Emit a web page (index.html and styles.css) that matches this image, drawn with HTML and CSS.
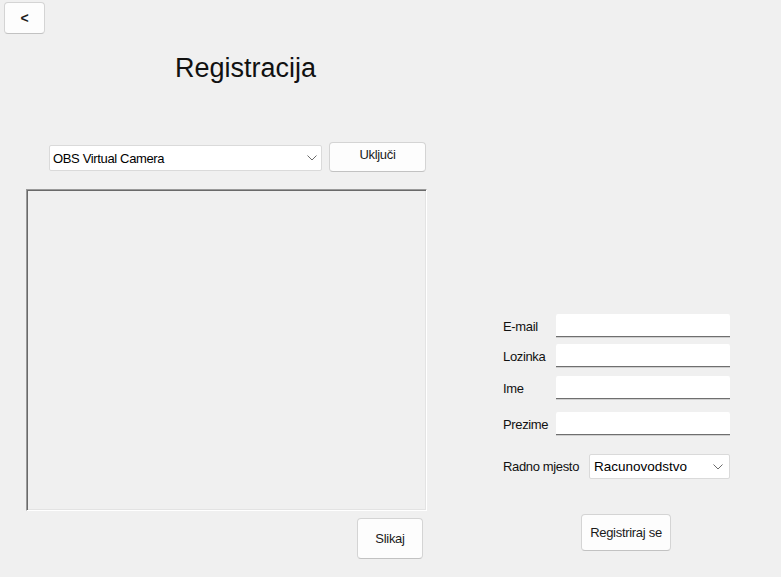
FILE: index.html
```html
<!DOCTYPE html>
<html lang="hr">
<head>
<meta charset="utf-8">
<title>Registracija</title>
<link rel="stylesheet" href="styles.css">
</head>
<body>
<div class="page">
  <button class="btn back">&lt;</button>
  <h1 class="title">Registracija</h1>
  <div class="main">
    <div class="left">
      <div class="cam-row">
        <div class="combo cam">
          <span class="combo-text">OBS Virtual Camera</span>
          <svg class="chev" width="10" height="6" viewBox="0 0 10 6"><path d="M0.5 0.5 L5 5 L9.5 0.5" fill="none" stroke="#6b6b6b" stroke-width="1"/></svg>
        </div>
        <button class="btn on">Uključi</button>
      </div>
      <div class="preview"></div>
      <button class="btn snap">Slikaj</button>
    </div>
    <div class="right">
      <div class="field"><label>E-mail</label><input type="text"></div>
      <div class="field"><label>Lozinka</label><input type="password"></div>
      <div class="field"><label>Ime</label><input type="text"></div>
      <div class="field"><label>Prezime</label><input type="text"></div>
      <div class="role">
        <label>Radno mjesto</label>
        <div class="combo job">
          <span class="combo-text big">Racunovodstvo</span>
          <svg class="chev" width="10" height="6" viewBox="0 0 10 6"><path d="M0.5 0.5 L5 5 L9.5 0.5" fill="none" stroke="#6b6b6b" stroke-width="1"/></svg>
        </div>
      </div>
      <button class="btn reg">Registriraj se</button>
    </div>
  </div>
</div>
</body>
</html>
```
FILE: styles.css
```css
html, body {
  margin: 0;
  padding: 0;
  background: #f0f0f0;
}
body {
  width: 781px;
  height: 577px;
  overflow: hidden;
  font-family: "Liberation Sans", Arial, sans-serif;
  color: #000;
}
.page {
  display: flex;
  flex-direction: column;
  align-items: flex-start;
}
.btn {
  box-sizing: border-box;
  background: #fdfdfd;
  border: 1px solid #d4d4d4;
  border-bottom-color: #c2c2c2;
  border-radius: 4px;
  font-family: "Liberation Sans", Arial, sans-serif;
  font-size: 13px;
  letter-spacing: -0.3px;
  color: #1b1b1b;
  padding: 0;
  cursor: default;
}
.back {
  margin: 2px 0 0 4px;
  width: 41px;
  height: 32px;
  font-size: 14px;
  font-weight: bold;
  letter-spacing: 0;
}
.title {
  margin: 18px 0 0 175px;
  font-size: 27px;
  line-height: 32px;
  font-weight: normal;
  color: #111;
}
.main {
  display: flex;
  margin-top: 58px;
}
.left {
  margin-left: 26px;
  width: 402px;
  display: flex;
  flex-direction: column;
}
.cam-row {
  display: flex;
  align-items: flex-start;
  padding-left: 23px;
}
.combo {
  box-sizing: border-box;
  background: #fff;
  border: 1px solid #dadada;
  border-radius: 2px;
  display: flex;
  align-items: center;
  justify-content: space-between;
  font-size: 13px;
  letter-spacing: -0.35px;
}
.combo-text {
  padding-left: 3px;
}
.combo-text.big {
  font-size: 13.5px;
  letter-spacing: 0;
  padding-left: 4px;
}
.cam {
  width: 273px;
  height: 26px;
  margin-top: 3px;
  padding-right: 4px;
}
.on {
  width: 97px;
  height: 30px;
  margin-left: 7px;
  padding-bottom: 5px;
}
.preview {
  box-sizing: border-box;
  margin-top: 17px;
  width: 401px;
  height: 322px;
  border: 1px solid;
  border-color: #9a9a9a #ffffff #ffffff #9a9a9a;
  box-shadow: inset 1px 1px 0 #6a6a6a, inset -1px -1px 0 #e3e3e3;
}
.snap {
  align-self: flex-end;
  margin: 7px 5px 0 0;
  width: 66px;
  height: 41px;
}
.right {
  margin-left: 75px;
  padding-top: 172px;
  width: 227px;
  display: flex;
  flex-direction: column;
  align-items: flex-start;
}
.field {
  display: flex;
  align-items: center;
  height: 23px;
}
.field + .field {
  margin-top: 7px;
}
.field:nth-child(3) {
  margin-top: 9px;
}
.field:nth-child(4) {
  margin-top: 13px;
}
label {
  font-size: 13px;
  letter-spacing: -0.35px;
  color: #111;
}
.field label {
  width: 53px;
  padding-top: 2px;
}
.field input {
  box-sizing: border-box;
  width: 174px;
  height: 23px;
  margin: 0;
  border: none;
  border-bottom: 1px solid #6f6f6f;
  box-shadow: 0 1px 0 #cfcfcf;
  border-radius: 2px 2px 0 0;
  background: #fff;
  outline: none;
  font-family: "Liberation Sans", Arial, sans-serif;
  font-size: 13px;
}
.role {
  display: flex;
  align-items: center;
  margin-top: 19px;
}
.role label {
  width: 86px;
}
.job {
  width: 141px;
  height: 25px;
  padding-right: 6px;
}
.reg {
  margin: 35px 0 0 78px;
  width: 90px;
  height: 37px;
}
```
